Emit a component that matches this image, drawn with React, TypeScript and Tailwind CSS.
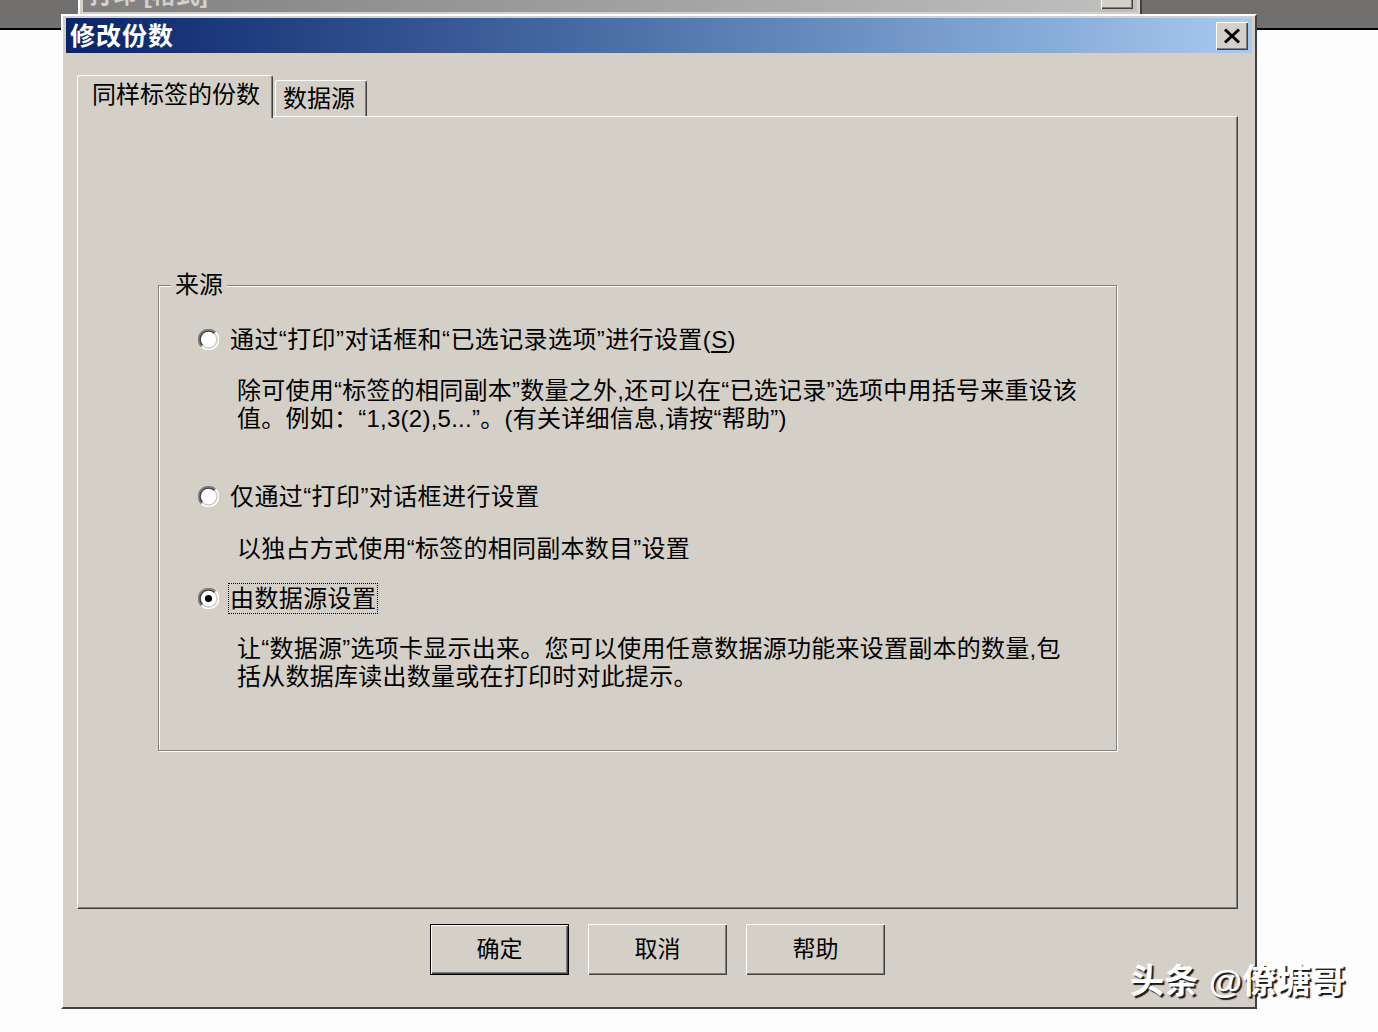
import React from "react";

const FONT = "font-['Liberation_Sans','Noto_Sans_CJK_SC',sans-serif]";

function Radio({ checked }: { checked?: boolean }) {
  return (
    <svg width="21" height="21" viewBox="0 0 20 20" className="shrink-0">
      <circle cx="10" cy="10" r="8" fill="#fff" />
      <path d="M3.28 16.72 A9.5 9.5 0 0 1 16.72 3.28" fill="none" stroke="#808080" strokeWidth="1.6" />
      <path d="M16.72 3.28 A9.5 9.5 0 0 1 3.28 16.72" fill="none" stroke="#ffffff" strokeWidth="1.6" />
      <path d="M4.27 15.73 A8.1 8.1 0 0 1 15.73 4.27" fill="none" stroke="#404040" strokeWidth="1.5" />
      <path d="M15.73 4.27 A8.1 8.1 0 0 1 4.27 15.73" fill="none" stroke="#d4d0c8" strokeWidth="1.5" />
      {checked && <circle cx="10" cy="10" r="3.4" fill="#000" />}
    </svg>
  );
}

function Option({
  label,
  checked,
  focused,
}: {
  label: React.ReactNode;
  checked?: boolean;
  focused?: boolean;
}) {
  return (
    <div className="flex h-[31px] items-center gap-[9px]">
      <Radio checked={checked} />
      <span
        className={`whitespace-nowrap border px-[1px] text-[24px] leading-[29px] tracking-[0.4px] ${
          focused ? "border-dotted border-black" : "border-transparent"
        }`}
      >
        {label}
      </span>
    </div>
  );
}

function Button({ label, primary }: { label: string; primary?: boolean }) {
  return (
    <button
      className={`flex h-[51px] w-[139px] items-center justify-center bg-[#d4d0c8] text-[23px] text-black shadow-[inset_1px_1px_0_#fff,inset_-1px_-1px_0_#404040,inset_-2px_-2px_0_#808080] ${
        primary ? "border border-black" : ""
      }`}
    >
      {label}
    </button>
  );
}

export default function App() {
  return (
    <div className={`relative h-[1032px] w-[1378px] overflow-hidden bg-[#fdfdfd] text-black ${FONT}`}>
      {/* desktop strip at the top */}
      <div className="h-[30px] w-full border-b-2 border-black bg-[#72706e]" />

      {/* window behind the dialog */}
      <div className="absolute left-[78px] top-[-27px] h-[60px] w-[1064px] border-2 border-t-white border-l-white border-r-[#404040] border-b-[#404040] bg-[#d4d0c8] px-[3px] pt-[2px]">
        <div className="flex h-[35px] items-center justify-between bg-linear-to-r from-[#808080] to-[#c0c0c0] pl-[6px] pr-[4px]">
          <span className="text-[24px] font-bold leading-[30px] text-[#d4d0c8]">打印 [格式]</span>
          <div className="h-[28px] w-[32px] bg-[#d4d0c8] shadow-[inset_1px_1px_0_#fff,inset_-1px_-1px_0_#404040,inset_-2px_-2px_0_#808080]" />
        </div>
      </div>

      {/* dialog */}
      <div className="absolute left-[61px] top-[14px] flex h-[995px] w-[1196px] flex-col border-2 border-t-white border-l-white border-r-[#404040] border-b-[#404040] bg-[#d4d0c8] px-[3px] pt-[2px]">
        <div className="flex h-[35px] shrink-0 items-center justify-between bg-linear-to-r from-[#0a246a] to-[#a6caf0] pl-[4px] pr-[4px]">
          <span className="text-[25px] font-bold leading-[30px] tracking-[1px] text-white">修改份数</span>
          <div className="flex h-[28px] w-[32px] items-center justify-center bg-[#d4d0c8] shadow-[inset_1px_1px_0_#fff,inset_-1px_-1px_0_#404040,inset_-2px_-2px_0_#808080]">
            <svg width="18" height="16" viewBox="0 0 18 16">
              <path d="M2 1.5 L16 14.5 M16 1.5 L2 14.5" stroke="#000" strokeWidth="3" />
            </svg>
          </div>
        </div>

        {/* tabs */}
        <div className="ml-[11px] mt-[22px] flex h-[41px] items-end">
          <div className="relative z-10 -mb-[2px] h-[43px] w-[196px] rounded-t-[3px] border-l border-r border-t border-l-white border-r-[#404040] border-t-white bg-[#d4d0c8] pl-[14px] pt-[4px] text-[24px] leading-[30px] shadow-[inset_-1px_0_0_#808080]">
            同样标签的份数
          </div>
          <div className="ml-[2px] h-[36px] w-[92px] rounded-t-[3px] border-l border-r border-t border-l-white border-r-[#404040] border-t-white bg-[#d4d0c8] pl-[7px] pt-[3px] text-[24px] leading-[30px] shadow-[inset_-1px_0_0_#808080]">
            数据源
          </div>
        </div>

        {/* tab panel */}
        <div className="ml-[11px] h-[793px] w-[1161px] shrink-0 border border-b-[#404040] border-l-white border-r-[#404040] border-t-white shadow-[inset_-1px_-1px_0_#808080]">
          <div className="relative ml-[80px] mt-[168px] h-[466px] w-[959px] border border-[#808080] pl-[39px] pt-[38px] shadow-[inset_1px_1px_0_#fff,1px_1px_0_#fff]">
            <span className="absolute -top-[15px] left-[12px] bg-[#d4d0c8] px-[4px] text-[24px] leading-[28px]">
              来源
            </span>

            <Option
              label={
                <>
                  通过“打印”对话框和“已选记录选项”进行设置(<span className="underline underline-offset-[3px]">S</span>)
                </>
              }
            />
            <p className="ml-[39px] mt-[22px] whitespace-nowrap text-[24px] leading-[28px] tracking-[0.25px]">
              除可使用“标签的相同副本”数量之外,还可以在“已选记录”选项中用括号来重设该
              <br />
              值。例如：“1,3(2),5...”。(有关详细信息,请按“帮助”)
            </p>

            <div className="mt-[48px]">
              <Option label="仅通过“打印”对话框进行设置" />
            </div>
            <p className="ml-[39px] mt-[23px] whitespace-nowrap text-[24px] leading-[28px] tracking-[0.25px]">
              以独占方式使用“标签的相同副本数目”设置
            </p>

            <div className="mt-[20px]">
              <Option label="由数据源设置" checked focused />
            </div>
            <p className="ml-[39px] mt-[21px] whitespace-nowrap text-[24px] leading-[28px] tracking-[0.25px]">
              让“数据源”选项卡显示出来。您可以使用任意数据源功能来设置副本的数量,包
              <br />
              括从数据库读出数量或在打印时对此提示。
            </p>
          </div>
        </div>

        {/* buttons */}
        <div className="ml-[11px] mt-[15px] flex w-[1161px] justify-center gap-[19px]">
          <Button label="确定" primary />
          <Button label="取消" />
          <Button label="帮助" />
        </div>
      </div>

      {/* watermark */}
      <div className="absolute left-[1130px] top-[961px] whitespace-nowrap text-[34px] font-bold leading-[40px] tracking-[0.5px] text-white [text-shadow:2px_2px_1px_#1a1a1a]">
        头条 @僚塘哥
      </div>
    </div>
  );
}
